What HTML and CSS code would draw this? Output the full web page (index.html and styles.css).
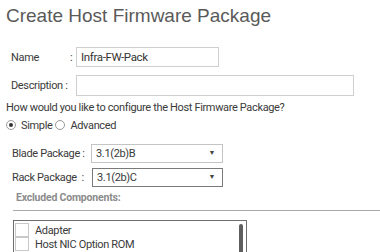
FILE: index.html
```html
<!DOCTYPE html>
<html lang="en">
<head>
  <meta charset="UTF-8" />
  <title>Create Host Firmware Package</title>
  <link rel="stylesheet" href="styles.css">
</head>
<body>
  <div class="page">
    <h1>Create Host Firmware Package</h1>

    <div class="field name-row">
      <span class="lbl">Name<span class="colon">:</span></span>
      <div class="input name-input">Infra-FW-Pack</div>
    </div>
    <div class="field desc-row">
      <span class="lbl">Description :</span>
      <div class="input desc-input"></div>
    </div>

    <p class="question">How would you like to configure the Host Firmware Package?</p>

    <div class="radios">
      <span class="radio checked"></span><span class="radio-text">Simple</span>
      <span class="radio"></span><span class="radio-text">Advanced</span>
    </div>

    <div class="pkg-row blade">
      <span class="pkg-lbl">Blade Package :</span>
      <div class="select">3.1(2b)B<span class="arrow">&#9660;</span></div>
    </div>
    <div class="pkg-row rack">
      <span class="pkg-lbl">Rack Package&nbsp; :</span>
      <div class="select focus">3.1(2b)C<span class="arrow">&#9660;</span></div>
    </div>

    <div class="excluded">Excluded Components:</div>
    <div class="rule"></div>

    <div class="list">
      <div class="list-row"><span class="check"></span>Adapter</div>
      <div class="list-row"><span class="check"></span>Host NIC Option ROM</div>
      <span class="scroll"></span>
    </div>
  </div>
</body>
</html>
```

FILE: styles.css
```css
body {
  margin: 0;
  font-family: Roboto, 'Liberation Sans', sans-serif;
  font-size: 11px;
  letter-spacing: -0.35px;
  color: #3a3a3a;
  background: #ffffff;
  overflow: hidden;
}

.page {
  padding-left: 6px;
}

h1 {
  font-family: 'Liberation Sans', Arial, sans-serif;
  font-size: 19px;
  font-weight: 400;
  letter-spacing: 0;
  line-height: 24px;
  color: #5a5a5a;
  margin: 4px 0 0;
}

.field {
  display: flex;
  align-items: center;
  padding-left: 5px;
}

.name-row {
  margin-top: 19px;
}

.desc-row {
  margin-top: 8px;
}

.lbl {
  width: 65px;
  flex-shrink: 0;
  white-space: nowrap;
}

.colon {
  margin-left: 31px;
}

.input {
  box-sizing: border-box;
  border: 1px solid #cfcfcf;
  padding-left: 4px;
  color: #333;
}

.name-input {
  width: 143px;
  height: 20px;
  line-height: 18px;
  font-size: 11.5px;
}

.desc-input {
  width: 278px;
  height: 21px;
}

.question {
  margin: 5px 0 0;
  line-height: 14px;
  white-space: nowrap;
}

.radios {
  display: flex;
  align-items: center;
  margin-top: 3px;
  height: 14px;
}

.radio {
  box-sizing: border-box;
  width: 10px;
  height: 10px;
  border: 1px solid #9a9a9a;
  border-radius: 50%;
  margin-right: 5px;
  position: relative;
}

.radio.checked::after {
  content: "";
  position: absolute;
  left: 2px;
  top: 2px;
  width: 4px;
  height: 4px;
  border-radius: 50%;
  background: #333;
}

.radio-text {
  margin-right: 3px;
}

.pkg-row {
  display: flex;
  align-items: center;
  padding-left: 6px;
}

.blade {
  margin-top: 12px;
}

.rack {
  margin-top: 5px;
}

.pkg-lbl {
  width: 79px;
  flex-shrink: 0;
  white-space: nowrap;
}

.rack .pkg-lbl {
  width: 80px;
}

.select {
  box-sizing: border-box;
  width: 132px;
  height: 19px;
  line-height: 17px;
  border: 1px solid #c4c4c4;
  padding-left: 4px;
  display: flex;
  justify-content: space-between;
}

.select.focus {
  border-color: #7a7a7a;
  width: 131px;
}

.arrow {
  font-size: 7px;
  color: #444;
  margin-right: 7px;
}

.excluded {
  margin-top: 4px;
  padding-left: 10px;
  font-size: 10.5px;
  font-weight: 700;
  letter-spacing: -0.2px;
  color: #8c8c8c;
  line-height: 13px;
}

.rule {
  margin: 6px 0 0 7px;
  height: 1px;
  background: #a8a8a8;
}

.list {
  position: relative;
  box-sizing: border-box;
  margin: 9px 0 0 7px;
  width: 234px;
  height: 60px;
  border: 1px solid #6e6e6e;
  padding: 2px 0 0 1px;
}

.list-row {
  display: flex;
  align-items: center;
  height: 14px;
}

.check {
  box-sizing: border-box;
  width: 14px;
  height: 14px;
  border: 1px solid #c8c8c8;
  margin-right: 6px;
}

.scroll {
  position: absolute;
  right: 3px;
  top: 3px;
  width: 4px;
  height: 50px;
  border-radius: 2px;
  background: #5e5e5e;
}
```
